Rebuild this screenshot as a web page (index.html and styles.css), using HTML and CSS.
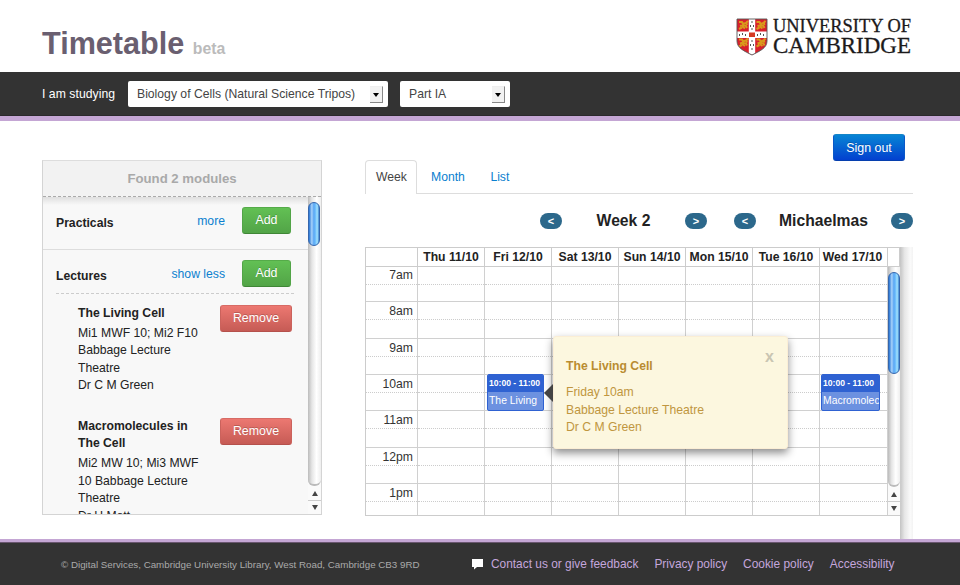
FILE: index.html
```html
<!DOCTYPE html>
<html lang="en">
<head>
<meta charset="utf-8">
<title>Timetable</title>
<link rel="stylesheet" href="styles.css">
</head>
<body>
<header class="masthead">
  <h1>Timetable <small>beta</small></h1>
  <svg class="logo" width="178" height="40" viewBox="0 0 178 40">
    <defs><clipPath id="shield"><path d="M1 1H31V23C31 30 24 33 16 37C8 33 1 30 1 23Z"/></clipPath></defs>
    <g clip-path="url(#shield)">
      <rect width="32" height="38" fill="#d8202c"/>
      <g fill="none" stroke="#d99a1c" stroke-width="2">
        <path id="lion" d="M3 4h3l1 2 3-1 2-2M4 8l3-1 3 1 1 2M3 11l3-1.500M7 5v4l2 1.500M10 4l1 3"/>
        <use href="#lion" x="17.5"/><use href="#lion" y="17.5"/><use href="#lion" x="17.5" y="17.5"/>
      </g>
      <path d="M12.800 0h6.400v13.500h13v6.500h-13v18h-6.400v-18h-13v-6.500h13z" fill="#fff"/>
      <g fill="#555"><path d="M15.500 3h1v2h-1zM14 7h1v2h-1zM17 7h1v2h-1zM15.500 10h1v2h-1zM15.500 22h1v2h-1zM14 26h1v2h-1zM17 26h1v2h-1zM15.500 30h1v2h-1zM3 16h1v2h-1zM6 15h1v2h-1zM9 16h1v2h-1zM21 16h1v2h-1zM24 15h1v2h-1zM27 16h1v2h-1z"/></g>
      <rect x="13" y="14.500" width="6" height="4.500" fill="#d63a22"/>
    </g>
    <path d="M1 1H31V23C31 30 24 33 16 37C8 33 1 30 1 23Z" fill="none" stroke="#555" stroke-width=".9"/>
    <text x="37" y="14" font-size="19" textLength="138" lengthAdjust="spacingAndGlyphs">UNIVERSITY OF</text>
    <text x="37" y="34.500" font-size="23.500" textLength="138" lengthAdjust="spacingAndGlyphs">CAMBRIDGE</text>
  </svg>
</header>

<div class="course-bar">
  <span class="label">I am studying</span>
  <span class="select select-course">Biology of Cells (Natural Science Tripos)<i class="drop"></i></span>
  <span class="select select-part">Part IA<i class="drop"></i></span>
</div>

<div class="content">
  <aside class="modules">
    <h2>Found 2 modules</h2>
    <div class="modules-body">
      <div class="list">
        <section class="module">
          <div class="module-head"><h3>Practicals</h3><a>more</a><span class="btn add">Add</span></div>
        </section>
        <section class="module">
          <div class="module-head"><h3>Lectures</h3><a>show less</a><span class="btn add">Add</span></div>
          <div class="series">
            <div class="details"><h4>The Living Cell</h4><p>Mi1 MWF 10; Mi2 F10<br>Babbage Lecture<br>Theatre<br>Dr C M Green</p></div>
            <span class="btn remove">Remove</span>
          </div>
          <div class="series">
            <div class="details"><h4>Macromolecules in<br>The Cell</h4><p>Mi2 MW 10; Mi3 MWF<br>10 Babbage Lecture<br>Theatre<br>Dr H Mott</p></div>
            <span class="btn remove">Remove</span>
          </div>
        </section>
      </div>
      <div class="scroll"><div class="track"><div class="thumb"></div></div><div class="arrow up"></div><div class="arrow down"></div></div>
    </div>
  </aside>

  <main>
    <div class="account"><span class="btn signout">Sign out</span></div>
    <nav class="tabs"><span class="tab active">Week</span><span class="tab">Month</span><span class="tab">List</span></nav>
    <div class="pager">
      <div class="week-pager"><span class="pill">&lt;</span><strong>Week 2</strong><span class="pill">&gt;</span></div>
      <div class="term-pager"><span class="pill">&lt;</span><strong>Michaelmas</strong><span class="pill">&gt;</span></div>
    </div>
    <div class="calendar-wrap">
      <div class="calendar">
        <div class="days"><b></b><b>Thu 11/10</b><b>Fri 12/10</b><b>Sat 13/10</b><b>Sun 14/10</b><b>Mon 15/10</b><b>Tue 16/10</b><b>Wed 17/10</b><b></b></div>
        <div class="calendar-body">
          <div class="hours">
            <span>7am</span><i></i><i></i><i></i><i></i><i></i><i></i><i></i>
            <span>8am</span><i></i><i></i><i></i><i></i><i></i><i></i><i></i>
            <span>9am</span><i></i><i></i><i></i><i></i><i></i><i></i><i></i>
            <span>10am</span><i></i><i><div class="event"><b>10:00 - 11:00</b><p>The Living</p></div></i><i></i><i></i><i></i><i></i><i><div class="event wide"><b>10:00 - 11:00</b><p>Macromolecules</p></div></i>
            <span>11am</span><i></i><i></i><i></i><i></i><i></i><i></i><i></i>
            <span>12pm</span><i></i><i></i><i></i><i></i><i></i><i></i><i></i>
            <span>1pm</span><i></i><i></i><i></i><i></i><i></i><i></i><i></i>
          </div>
          <div class="scroll"><div class="track"><div class="thumb"></div></div><div class="arrow up"></div><div class="arrow down"></div></div>
        </div>
        <div class="popover">
          <span class="close">x</span>
          <h4>The Living Cell</h4>
          <p>Friday 10am<br>Babbage Lecture Theatre<br>Dr C M Green</p>
        </div>
      </div>
      <div class="page-track"></div>
    </div>
  </main>
</div>

<footer>
  <span class="copyright">© Digital Services, Cambridge University Library, West Road, Cambridge CB3 9RD</span>
  <svg class="bubble" width="11" height="11" viewBox="0 0 11 11"><path d="M0 0H11V8H5L2 10.500V8H0Z" fill="#fff"/></svg>
  <a>Contact us or give feedback</a><a>Privacy policy</a><a>Cookie policy</a><a>Accessibility</a>
</footer>
</body>
</html>
```

FILE: styles.css
```css
* { box-sizing: border-box; }
body {
  margin: 0;
  width: 960px;
  height: 585px;
  overflow: hidden;
  display: flex;
  flex-direction: column;
  background: #fff;
  color: #333;
  font: 12.2px/17.4px "Liberation Sans", Arial, sans-serif;
}
h1, h2, h3, h4, p { margin: 0; font-size: inherit; }
i { font-style: normal; }
a { color: #0b80cf; }

.masthead { height: 72px; display: flex; justify-content: space-between; padding: 18px 46px 0 42px; }
h1 { font-size: 30.6px; line-height: 50px; color: #6a5f70; }
h1 small { font-size: 15.8px; color: #bbb; }
.logo { font-family: "Liberation Serif", serif; fill: #1c1a1b; }
.logo text { stroke: #1c1a1b; stroke-width: .3; }

.course-bar {
  height: 49px;
  display: flex;
  align-items: center;
  padding: 0 42px;
  background: #333;
  border-bottom: 5px solid #c4a6d4;
  box-shadow: inset 0 -1px #2b292c;
}
.label { width: 86px; padding-top: 1px; color: #fff; letter-spacing: .05px; }
.select {
  height: 26px;
  display: flex;
  align-items: center;
  justify-content: space-between;
  padding: 1px 5px 0 9px;
  background: #fff;
  border-radius: 2px;
  color: #444;
}
.select-course { width: 260px; }
.select-part { width: 110px; margin-left: 12px; }
.drop {
  width: 13px;
  height: 17px;
  background: #f2f2f2;
  border: solid #eee;
  border-width: 1px 1px 1px 0;
  border-right-color: #888;
  border-bottom-color: #888;
  display: flex;
  align-items: center;
  justify-content: center;
}
.drop::before { content: ""; border: 3px solid transparent; border-top: 4px solid #000; border-bottom: 0; }

.content { height: 418px; display: flex; }
.modules {
  width: 280px;
  height: 355px;
  margin: 39px 43px 0 42px;
  border: 1px solid #d4d4d4;
  border-top-color: #ddd;
  background: #f8f8f8;
  display: flex;
  flex-direction: column;
}
.modules h2 {
  flex: none;
  height: 36px;
  text-align: center;
  font-size: 13.2px;
  line-height: 36px;
  color: #a9a9a9;
  background: #f2f2f2;
  border-bottom: 1px dashed #aaa;
}
.modules-body { flex: 1; min-height: 0; display: flex; }
.list { flex: 1; overflow: hidden; color: #222; background: linear-gradient(#dfdfdf, #f8f8f8 8px); }
.module:first-child { height: 53px; border-bottom: 1px solid #ddd; }
.module-head { height: 44px; margin: 0 14px 0 13px; padding: 10px 3px 0 0; display: flex; }
.module-head h3 { flex: 1; padding-top: 8px; }
.module-head a { padding-top: 5.5px; margin-right: 17px; }
.module + .module .module-head { border-bottom: 1px dashed #ccc; }
.series { display: flex; justify-content: space-between; padding: 11px 16px 0 35px; height: 113px; }
.series h4 { margin-bottom: 2.500px; }
.btn {
  height: 27px;
  border-radius: 3px;
  border: 1px solid;
  color: #fff;
  text-align: center;
  line-height: 25px;
  font-size: 12.4px;
  text-shadow: 0 -1px rgba(0,0,0,.2);
}
.add { width: 49px; background: linear-gradient(#62c054, #52a447); border-color: #55ab49 #52a447 #3f8636; }
.remove { width: 72px; background: linear-gradient(#ec7871, #c65b55); border-color: #d76b65 #cb625c #b5514c; }
.signout { width: 72px; line-height: 26px; background: linear-gradient(#0785d5, #0340cf); border-color: #1585c8 #0a58c8 #063fae; }

.scroll { width: 13px; flex: none; display: flex; flex-direction: column; background: #fafafa; }
.track {
  flex: 1;
  background: linear-gradient(90deg, #bbb, #e5e5e5 30%, #fff 65%, #eee);
  border-bottom: 2px solid #bbb;
  border-radius: 0 0 6px 6px;
}
.thumb {
  width: 12px;
  border: 1px solid #3566ad;
  border-radius: 6px;
  background: linear-gradient(90deg, #2372d2, #a9d3fa 28%, #5aa6f3 48%, #68b9fb 62%, #a5e5ff 82%, #3f85ce);
}
.modules .thumb { height: 44px; margin-top: 5px; }
.arrow { height: 14px; display: flex; align-items: center; justify-content: center; }
.arrow::before { content: ""; border: 3px solid transparent; }
.up::before { border-bottom: 5px solid #444; border-top: 0; }
.down { border-top: 1px solid #ccc; }
.down::before { border-top: 5px solid #444; border-bottom: 0; }

main { width: 548px; }
.account { height: 39px; padding: 13px 8px 0 0; display: flex; justify-content: flex-end; }
.tabs { height: 34px; display: flex; border-bottom: 1px solid #ddd; }
.tab { height: 33px; line-height: 35px; padding: 0 11.5px 0 14px; color: #0b80cf; }
.tab.active { width: 52px; height: 34px; line-height: 33px; padding: 0 0 0 10px; color: #444; background: #fff; border: 1px solid #ddd; border-bottom: 0; border-radius: 4px 4px 0 0; }
.pager { height: 53px; display: flex; justify-content: flex-end; gap: 27px; }
.week-pager { width: 167px; }
.term-pager { width: 179px; }
.week-pager, .term-pager { display: flex; justify-content: space-between; align-items: center; }
.pager strong { padding-top: 1px; font-size: 15.7px; color: #222; }
.pill { width: 22px; height: 16px; border-radius: 8px; background: #2c688b; color: #fff; text-align: center; font: bold 11px/16px "Liberation Sans", sans-serif; }

.calendar-wrap { height: 292px; display: flex; align-items: flex-start; }
.calendar { position: relative; width: 535px; height: 269px; border: 1px solid #ccc; border-right: 0; }
.days, .hours { display: grid; grid-template-columns: 51px repeat(6, 67px) 69px; }
.days { grid-template-columns: 51px repeat(6, 67px) 69px 12px; height: 19px; border-bottom: 1px solid #ccc; text-align: center; line-height: 18px; color: #222; }
.days b { border-right: 1px solid #ccc; white-space: nowrap; }
.days b:nth-child(8) { padding-right: 2px; }
.calendar-body { display: flex; height: 248px; }
.hours { grid-template-rows: 35px 37px 36px 36px 37px 36px 31px; }
.days, .hours { grid-template-columns: 52px repeat(6, 67px) 68px; }
.days { grid-template-columns: 52px repeat(6, 67px) 68px 12px; }
.hours > * { position: relative; border: solid #d0d0d0; border-width: 0 1px 1px 0; }
.hours > :nth-last-child(-n+8) { border-bottom: 0; }
.hours > *::after { content: ""; position: absolute; left: 0; right: 0; top: 17px; border-top: 1px dotted #ccc; }
.hours span { text-align: right; padding-right: 4px; }
.hours span:nth-child(n+9) { padding-top: 1px; }
.event { position: absolute; z-index: 1; left: 2px; top: -1px; width: 57px; height: 37px; border-radius: 2px; border: 1px solid #2f62d2; background: #6c91e0; color: #fff; overflow: hidden; }
.event.wide { left: 1px; width: 59px; }
.event b { display: block; height: 17px; padding-left: 1px; background: #2f62d2; font-size: 8.6px; line-height: 17px; white-space: nowrap; }
.event p { padding-left: 1px; font-size: 10.4px; line-height: 18px; white-space: nowrap; }
.calendar .scroll { border-right: 1px solid #ccc; }
.calendar .thumb { height: 102px; margin-top: 5px; }
.page-track { width: 13px; height: 292px; background: linear-gradient(90deg, #c3c3c3, #e6e6e6 35%, #fafafa 80%, #f3f3f3); }

.popover {
  position: absolute;
  z-index: 2;
  left: 187px;
  top: 88px;
  width: 235px;
  height: 113px;
  padding: 21px 12px;
  background: #fcf7df;
  border: 1px solid #fbeed5;
  border-radius: 3px;
  box-shadow: 0 4px 9px rgba(0,0,0,.45);
  color: #c09640;
}
.popover::before { content: ""; position: absolute; left: -10px; top: 47px; border: 9px solid transparent; border-right-color: #444; border-left: 0; }
.popover h4 { margin-bottom: 9px; color: #b98c30; }
.close { position: absolute; right: 13px; top: 11px; font-size: 16px; font-weight: bold; color: #c9c5b2; }

footer {
  flex: 1;
  display: flex;
  align-items: center;
  padding: 2px 0 0 61px;
  background: #333;
  border-top: 3px solid #c4a6d4;
  box-shadow: inset 0 1px #69566f;
  font-size: 11.9px;
}
footer a { margin-right: 16px; color: #c4a6dc; white-space: nowrap; }
.copyright { width: 411px; font-size: 9.780px; color: #aaa; white-space: nowrap; }
.bubble { margin-right: 8px; }
```
